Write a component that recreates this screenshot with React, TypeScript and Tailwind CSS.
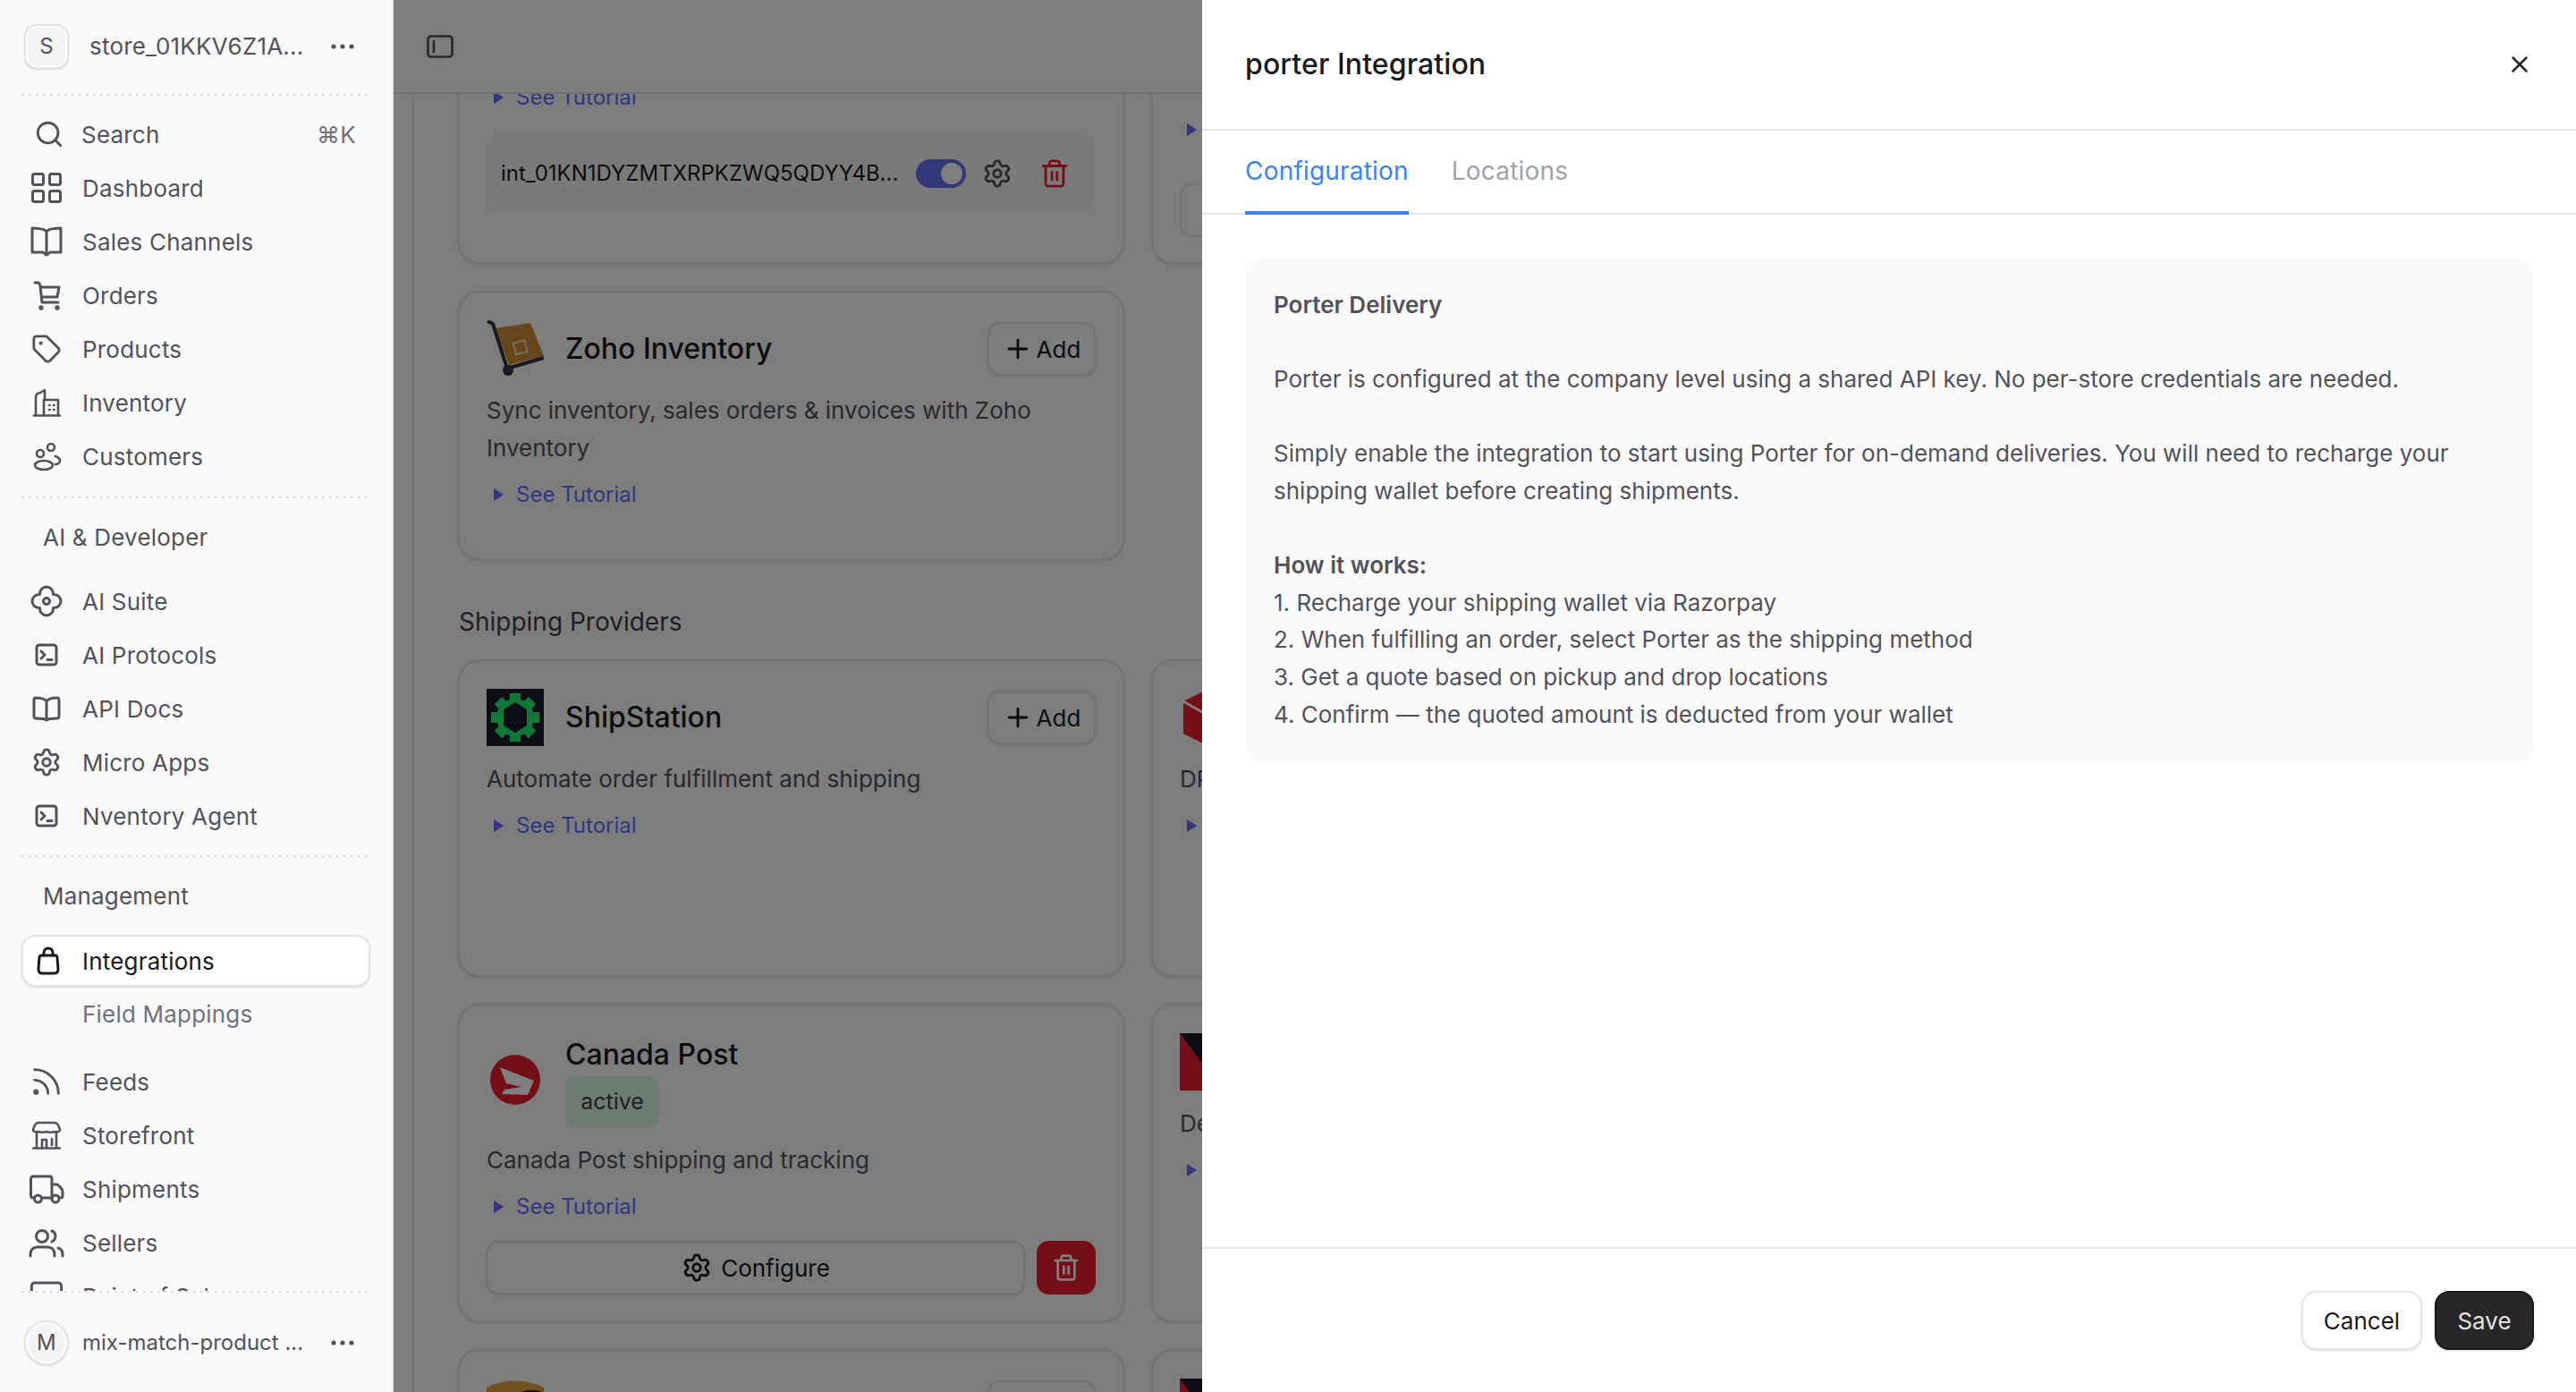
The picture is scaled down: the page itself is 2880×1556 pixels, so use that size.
import { ReactNode } from "react";
import { Plus, Search, Settings, Rss, Tag, Trash2, X, Monitor } from "lucide-react";

const inter = "font-['Inter',sans-serif]";

function Svg({ size = 36, children, w }: { size?: number; w?: number; children: ReactNode }) {
  return (
    <svg
      width={w ?? size}
      height={size}
      viewBox={`0 0 ${w ?? size} ${size}`}
      fill="none"
      stroke="currentColor"
      strokeWidth="3"
      strokeLinecap="round"
      strokeLinejoin="round"
      className="shrink-0"
    >
      {children}
    </svg>
  );
}

const DashboardIcon = () => (
  <Svg>
    <rect x="2.5" y="2.5" width="12" height="12" rx="2" />
    <rect x="21.5" y="2.5" width="12" height="12" rx="2" />
    <rect x="2.5" y="21.5" width="12" height="12" rx="2" />
    <rect x="21.5" y="21.5" width="12" height="12" rx="2" />
  </Svg>
);
const BookSquareIcon = () => (
  <Svg w={38}>
    <path d="M19 7C17 4 13 3 3 3V30H15L19 33L23 30H35V3C25 3 21 4 19 7ZM19 7V31" />
  </Svg>
);
const CartIcon = () => (
  <Svg>
    <path d="M5 4H8C10 4 10.5 5 11 8L13 26H31" />
    <path d="M11.5 9H32L30 20H13" />
    <circle cx="12" cy="32" r="1.2" />
    <circle cx="30" cy="32" r="1.2" />
  </Svg>
);
const BuildingIcon = () => (
  <Svg>
    <path d="M4 32.5H33" strokeWidth="2.6" />
    <path d="M6 32V13C6 9 8 7 11 7L16 4V15" strokeWidth="2.6" />
    <path d="M15 32V15H31V32" strokeWidth="2.6" />
    <path d="M21 21h.6M26 21h.6M21 26h.6M26 26h.6" strokeWidth="2.6" />
  </Svg>
);
const CustomersIcon = () => (
  <Svg>
    <circle cx="23" cy="8" r="4" strokeWidth="2.6" />
    <circle cx="11" cy="15" r="4" strokeWidth="2.6" />
    <ellipse cx="15" cy="28" rx="10" ry="5" strokeWidth="2.6" />
    <path d="M28 18C31 19 33 21 33 23C33 25 31 27 28 27" strokeWidth="2.6" />
  </Svg>
);
const CloverIcon = () => (
  <Svg>
    <path d="M18 2a7.5 7.5 0 0 1 7.5 7.5v1h1a7.5 7.5 0 0 1 0 15h-1v1a7.5 7.5 0 0 1-15 0v-1h-1a7.5 7.5 0 0 1 0-15h1v-1A7.5 7.5 0 0 1 18 2Z" />
    <circle cx="18" cy="18" r="3.5" />
  </Svg>
);
const TerminalIcon = () => (
  <Svg>
    <rect x="7" y="7" width="22" height="22" rx="3" />
    <path d="M12 14l4 4-4 4M19 23.5h5" />
  </Svg>
);
const BookIcon = () => (
  <Svg>
    <path d="M18 10C16 7 11 6 5 6H6C5 6 4 7 4 8V27C4 28 5 29 6 29C11 29 16 29 18 31C20 29 25 29 30 29C31 29 32 28 32 27V8C32 7 31 6 30 6C25 6 20 7 18 10ZM18 10V30" />
  </Svg>
);
const StoreIcon = () => (
  <Svg>
    <path
      d="M9 4H27C30 4 32 8 33 12C33 14 30 15 27 14C24 15 21 15 18 14C15 15 12 15 9 14C6 15 3 14 3 12C4 8 6 4 9 4Z"
      strokeWidth="2.6"
    />
    <path d="M7 15V32M29 15V32M3 32.5H33M13 32V23H18V32M24 22V29" strokeWidth="2.6" />
  </Svg>
);
const TruckIcon = () => (
  <Svg w={40}>
    <path d="M6 28H5C3.5 28 2.5 27 2.5 25V7C2.5 5 3.5 4 5 4H24C25 4 26 5 26 7V28H15" />
    <path d="M26 13H31C33 13 38 18 38 21V26C38 27 37 28 35 28" />
    <circle cx="10.5" cy="29" r="4" />
    <circle cx="30" cy="29" r="4" />
  </Svg>
);
const UsersIcon = () => (
  <Svg w={40}>
    <circle cx="15" cy="11" r="6.5" />
    <path d="M2 33V31C2 26 5 23 10 23H21C26 23 29 26 29 31V33" />
    <path d="M26 5C29 6 30 8 30 11C30 14 28 16 26 17" />
    <path d="M33 24C36 25 38 28 38 31V33" />
  </Svg>
);
const BagIcon = () => (
  <Svg>
    <path d="M10.5 12H25.5C27 12 28 13 28 14.5L29 27C29 30 27.5 32 25 32H11C8.5 32 7 30 7 27L8 14.5C8 13 9 12 10.5 12Z" />
    <path d="M13 12V9C13 6 15 4 18 4C21 4 23 6 23 9V12" />
  </Svg>
);
const DotsIcon = () => (
  <svg width="26" height="6" viewBox="0 0 26 6" fill="#52525b" className="shrink-0">
    <circle cx="3" cy="3" r="2.6" />
    <circle cx="13" cy="3" r="2.6" />
    <circle cx="23" cy="3" r="2.6" />
  </svg>
);

function Separator() {
  return (
    <div className="ml-6 mr-[28px] h-[2px] shrink-0 bg-[linear-gradient(to_right,#d4d4d8_2px,transparent_2px)] bg-[length:8px_2px]" />
  );
}

function NavRow({ icon, label }: { icon: ReactNode; label: string }) {
  return (
    <div className="flex h-[60px] items-center text-[#52525b]">
      <div className="flex w-[92px] shrink-0 justify-center pl-[12px]">{icon}</div>
      <span>{label}</span>
    </div>
  );
}

function SectionLabel({ children }: { children: ReactNode }) {
  return <div className="flex h-[60px] items-center pl-[48px] text-[#52525b]">{children}</div>;
}

function Sidebar() {
  return (
    <aside className="z-10 flex h-full w-[440px] shrink-0 flex-col border-r-2 border-[#e4e4e7] bg-[#fafafa] text-[26px] tracking-[0.2px]">
      <div className="flex h-[105px] shrink-0 items-center pl-[27px] pr-[42px] pb-[2px]">
        <div className="flex h-[50px] w-[50px] items-center justify-center rounded-[14px] border-2 border-[#e4e4e7] bg-white shadow-sm">
          <div className="flex h-[42px] w-[42px] items-center justify-center rounded-[8px] bg-[#f4f4f5] text-[24px] text-[#52525b]">
            S
          </div>
        </div>
        <span className="ml-[23px] flex-1 text-[#52525b]">store_01KKV6Z1A...</span>
        <DotsIcon />
      </div>
      <Separator />
      <nav className="min-h-0 flex-1 overflow-hidden">
        <div className="mt-[13px] flex h-[60px] items-center pr-[40px] text-[#52525b]">
          <div className="flex w-[91px] shrink-0 justify-center pl-[18px]">
            <Search size={34} strokeWidth={2} />
          </div>
          <span className="flex-1">Search</span>
          <span className="text-[#71717a]">⌘K</span>
        </div>
        <NavRow icon={<DashboardIcon />} label="Dashboard" />
        <NavRow icon={<BookSquareIcon />} label="Sales Channels" />
        <NavRow icon={<CartIcon />} label="Orders" />
        <NavRow icon={<Tag size={34} strokeWidth={2} />} label="Products" />
        <NavRow icon={<BuildingIcon />} label="Inventory" />
        <NavRow icon={<CustomersIcon />} label="Customers" />
        <div className="mt-[15px]">
          <Separator />
        </div>
        <div className="mt-[13px]">
          <SectionLabel>AI &amp; Developer</SectionLabel>
        </div>
        <div className="mt-[12px]">
          <NavRow icon={<CloverIcon />} label="AI Suite" />
          <NavRow icon={<TerminalIcon />} label="AI Protocols" />
          <NavRow icon={<BookIcon />} label="API Docs" />
          <NavRow icon={<Settings size={34} strokeWidth={2} />} label="Micro Apps" />
          <NavRow icon={<TerminalIcon />} label="Nventory Agent" />
        </div>
        <div className="mt-[14px]">
          <Separator />
        </div>
        <div className="mt-[13px]">
          <SectionLabel>Management</SectionLabel>
        </div>
        <div className="mx-[24px] mt-[14px] flex h-[58px] w-[390px] items-center rounded-[16px] border-2 border-[#e4e4e7] bg-white text-[#18181b] shadow-sm">
          <div className="flex w-[55px] shrink-0 justify-center">
            <BagIcon />
          </div>
          <span className="ml-[11px]">Integrations</span>
        </div>
        <div className="flex h-[60px] items-center pl-[92px] text-[#71717a]">Field Mappings</div>
        <div className="mt-[16px]">
          <NavRow icon={<Rss size={40} strokeWidth={1.7} />} label="Feeds" />
          <NavRow icon={<StoreIcon />} label="Storefront" />
          <NavRow icon={<TruckIcon />} label="Shipments" />
          <NavRow icon={<UsersIcon />} label="Sellers" />
          <NavRow icon={<Monitor size={40} strokeWidth={1.8} />} label="Point of Sale" />
        </div>
      </nav>
      <Separator />
      <div className="flex h-[111px] shrink-0 items-center pl-[27px] pr-[42px]">
        <div className="flex h-[50px] w-[50px] items-center justify-center rounded-full border-2 border-[#e4e4e7] bg-white shadow-sm">
          <div className="flex h-[42px] w-[42px] items-center justify-center rounded-full bg-[#f4f4f5] text-[24px] text-[#52525b]">
            M
          </div>
        </div>
        <span className="ml-[15px] flex-1 text-[24px] tracking-normal text-[#52525b]">mix-match-product ...</span>
        <DotsIcon />
      </div>
    </aside>
  );
}

const ZohoLogo = () => (
  <svg width="64" height="64" viewBox="0 0 64 64" className="shrink-0">
    <polygon points="10,9 49,3 64,40 25,50" fill="#cf8d36" />
    <rect x="31" y="24" width="13" height="13" fill="none" stroke="#f4dcb0" strokeWidth="2" transform="rotate(-15 37 30)" />
    <path d="M1 1L7 4L23 54L64 42" fill="none" stroke="#33333d" strokeWidth="4" />
    <circle cx="24" cy="56" r="6" fill="#33333d" />
  </svg>
);

const ShipStationLogo = () => (
  <svg width="64" height="64" viewBox="0 0 64 64" className="shrink-0">
    <rect width="64" height="64" fill="#1b1a2c" />
    <g fill="#24f06f">
      <circle cx="32" cy="32" r="21" />
      {[0, 45, 90, 135].map((a) => (
        <rect key={a} x="26" y="5" width="12" height="54" transform={`rotate(${a} 32 32)`} />
      ))}
    </g>
    <polygon points="32,15 45,23 45,41 32,49 19,41 19,23" fill="#1b1a2c" />
  </svg>
);

const CanadaPostLogo = () => (
  <svg width="64" height="64" viewBox="0 0 64 64" className="shrink-0">
    <circle cx="32" cy="32" r="28" fill="#e81f2e" />
    <polygon points="15,18 53,33 46,49 17,48 20,43 39,40 22,36" fill="#ffffff" />
  </svg>
);

const DpdLogo = () => (
  <svg width="64" height="64" viewBox="0 0 64 64" className="shrink-0">
    <polygon points="32,0 60,14 60,50 32,64 4,50 4,14" fill="#e81f2e" />
    <path d="M4 14L32 30" stroke="#ffffff" strokeWidth="3" />
  </svg>
);

const FlagLogo = () => (
  <svg width="64" height="64" viewBox="0 0 64 64" className="shrink-0">
    <rect width="64" height="64" fill="#e81f2e" />
    <polygon points="0,0 64,0 64,60 24,32" fill="#1b1a2c" />
  </svg>
);

const UpsLogo = () => (
  <svg width="64" height="64" viewBox="0 0 64 64" className="shrink-0">
    <path d="M0 10C20 0 44 0 64 10V40C64 52 44 60 32 64C20 60 0 52 0 40Z" fill="#e3a23a" />
    <path d="M26 26C36 12 48 12 60 14V40H26Z" fill="#1b1a2c" />
  </svg>
);

function SeeTutorial() {
  return (
    <div className="mt-[14px] flex h-[34px] items-center gap-[14px] pl-[8px] text-[24px] text-[#5f70ff]">
      <svg width="11" height="14" viewBox="0 0 11 14" className="shrink-0">
        <polygon points="0,0 11,7 0,14" fill="#5f70ff" />
      </svg>
      See Tutorial
    </div>
  );
}

function AddButton() {
  return (
    <button className="ml-auto flex h-[60px] w-[121px] shrink-0 items-center justify-center gap-[4px] rounded-[14px] border-2 border-[#e4e4e7] bg-[#fafafa] text-[26px] text-[#18181b] shadow-sm">
      <Plus size={34} strokeWidth={2} />
      Add
    </button>
  );
}

function Card({ height, children }: { height: string; children: ReactNode }) {
  return (
    <div className={`${height} overflow-hidden rounded-[24px] border-2 border-[#e4e4e7] bg-[#fafafa] px-[30px] pt-[31px] shadow-sm`}>
      {children}
    </div>
  );
}

function Provider({ logo, name, desc }: { logo: ReactNode; name: string; desc: string }) {
  return (
    <>
      <div className="flex h-[64px] items-center">
        {logo}
        <span className="ml-[24px] text-[32px] font-medium text-[#18181b]">{name}</span>
        <AddButton />
      </div>
      <p className="mt-[16px] text-[26px] leading-[42px] text-[#52525b]">{desc}</p>
      <SeeTutorial />
    </>
  );
}

function Main() {
  return (
    <main className="relative flex h-full min-w-0 flex-1 flex-col bg-[#fafafa]">
      <header className="flex h-[105px] shrink-0 items-center border-b-2 border-[#e4e4e7] pl-[37px] text-[#52525b]">
        <svg width="30" height="26" viewBox="0 0 30 26" fill="none" stroke="currentColor" strokeWidth="2.6" strokeLinecap="round">
          <rect x="1.5" y="1.5" width="27" height="23" rx="3.5" />
          <path d="M8 7V19" />
        </svg>
      </header>
      <div className="ml-[21px] min-h-0 flex-1 overflow-hidden border-l-2 border-[#e4e4e7] pl-[49px]">
        <div className="-mt-[45px] grid w-[1520px] grid-cols-[745px_745px] gap-x-[30px]">
          <div className="h-[235px] overflow-hidden rounded-[24px] border-2 border-[#e4e4e7] bg-[#fafafa] px-[30px] pt-[30px] shadow-sm">
            <div className="-mt-[14px]">
              <SeeTutorial />
            </div>
            <div className="mt-[24px] flex h-[88px] items-center rounded-[14px] bg-[#f4f4f5] pl-[16px] pr-[29px] text-[24px] text-[#18181b]">
              <span className="flex-1">int_01KN1DYZMTXRPKZWQ5QDYY4B...</span>
              <div className="flex h-[32px] w-[56px] items-center justify-end rounded-full bg-[#6472f0] pr-[4px]">
                <div className="h-[24px] w-[24px] rounded-full bg-white" />
              </div>
              <Settings size={34} strokeWidth={2} className="ml-[18px] text-[#52525b]" />
              <Trash2 size={34} strokeWidth={2} className="ml-[30px] text-[#e81f2e]" />
            </div>
          </div>
          <div className="h-[235px] overflow-hidden rounded-[24px] border-2 border-[#e4e4e7] bg-[#fafafa] px-[30px] pt-[66px] shadow-sm">
            <div className="-mt-[14px]">
              <SeeTutorial />
            </div>
            <div className="mt-[43px] h-[60px] rounded-[14px] border-2 border-[#e4e4e7]" />
          </div>

          <div className="col-span-2 mt-[30px] grid grid-cols-[745px_745px] gap-x-[30px]">
            <Card height="h-[301px]">
              <Provider
                logo={<ZohoLogo />}
                name="Zoho Inventory"
                desc="Sync inventory, sales orders & invoices with Zoho Inventory"
              />
            </Card>
            <div />
          </div>

          <div className="col-span-2 mt-[52px] flex h-[34px] items-center pl-[1px] text-[28px] text-[#3f3f46]">
            Shipping Providers
          </div>

          <div className="col-span-2 mt-[25px] grid grid-cols-[745px_745px] gap-x-[30px] gap-y-[30px]">
            <Card height="h-[355px]">
              <Provider logo={<ShipStationLogo />} name="ShipStation" desc="Automate order fulfillment and shipping" />
            </Card>
            <Card height="h-[355px]">
              <Provider logo={<DpdLogo />} name="DPD" desc="DPD shipping and tracking" />
            </Card>
            <Card height="h-[356px]">
              <div className="flex h-[105px] items-start">
                <div className="mt-[20px]">
                  <CanadaPostLogo />
                </div>
                <div className="ml-[24px]">
                  <div className="h-[48px] text-[32px] leading-[48px] font-medium text-[#18181b]">Canada Post</div>
                  <div className="flex h-[57px] w-[105px] items-center justify-center rounded-[12px] bg-[#d8f8e6] text-[25px] text-[#3f3f46]">
                    active
                  </div>
                </div>
              </div>
              <p className="mt-[16px] text-[26px] leading-[42px] text-[#52525b]">Canada Post shipping and tracking</p>
              <SeeTutorial />
              <div className="mt-[21px] flex h-[60px] gap-[13px]">
                <button className="flex flex-1 items-center justify-center gap-[10px] rounded-[14px] border-2 border-[#e4e4e7] text-[26px] text-[#18181b] shadow-sm">
                  <Settings size={34} strokeWidth={2} />
                  Configure
                </button>
                <button className="flex w-[66px] items-center justify-center rounded-[14px] bg-[#e81f2e] text-white">
                  <Trash2 size={32} strokeWidth={2} />
                </button>
              </div>
            </Card>
            <Card height="h-[356px]">
              <Provider logo={<FlagLogo />} name="DHL" desc="Deutsche Post shipping" />
            </Card>
            <Card height="h-[340px]">
              <Provider logo={<UpsLogo />} name="UPS" desc="UPS shipping and tracking" />
            </Card>
            <Card height="h-[340px]">
              <Provider logo={<FlagLogo />} name="Aramex" desc="Aramex shipping" />
            </Card>
          </div>
        </div>
      </div>
      {/* modal backdrop */}
      <div className="absolute inset-0 bg-black/50" />
    </main>
  );
}

function Drawer() {
  return (
    <div className="absolute inset-y-0 right-0 z-20 flex w-[1536px] flex-col bg-white">
      <div className="flex h-[146px] shrink-0 items-center justify-between border-b-2 border-[#e4e4e7] pl-[48px] pr-[48px]">
        <h2 className="text-[32px] font-medium tracking-[0.1px] text-[#18181b]">porter Integration</h2>
        <X size={30} strokeWidth={2} className="text-[#27272a]" />
      </div>
      <div className="flex h-[94px] shrink-0 gap-[48px] border-b-2 border-[#e4e4e7] px-[48px] text-[28px] tracking-[0.2px]">
        <div className="relative flex items-center pb-[2px] text-[#3b82f6]">
          Configuration
          <div className="absolute inset-x-0 -bottom-[2px] h-[4px] bg-[#3b82f6]" />
        </div>
        <div className="flex items-center pb-[2px] text-[#a1a1aa]">Locations</div>
      </div>
      <div className="min-h-0 flex-1 px-[48px] pt-[48px]">
        <div className="rounded-[14px] bg-[#fafafa] p-[32px] text-[26px] leading-[41.6px] whitespace-pre-wrap text-[#52525b]">
          <strong className="font-semibold">Porter Delivery</strong>
          {"\n\nPorter is configured at the company level using a shared API key. No per-store credentials are needed.\n\nSimply enable the integration to start using Porter for on-demand deliveries. You will need to recharge your shipping wallet before creating shipments.\n\n"}
          <strong className="font-semibold">How it works:</strong>
          {"\n1. Recharge your shipping wallet via Razorpay\n2. When fulfilling an order, select Porter as the shipping method\n3. Get a quote based on pickup and drop locations\n4. Confirm — the quoted amount is deducted from your wallet"}
        </div>
      </div>
      <div className="flex h-[162px] shrink-0 items-start justify-end gap-[14px] border-t-2 border-[#e4e4e7] pr-[47px] pt-[47px] text-[26px]">
        <button className="h-[66px] w-[135px] rounded-[16px] border-2 border-[#e4e4e7] bg-white text-[#18181b] shadow-sm">Cancel</button>
        <button className="h-[66px] w-[111px] rounded-[16px] border-2 border-[#18181b] bg-[#27272a] text-[#e4e4e7] shadow-sm">Save</button>
      </div>
    </div>
  );
}

export default function App() {
  return (
    <div className={`${inter} relative flex h-[1556px] w-[2880px] overflow-hidden bg-[#fafafa]`}>
      <Sidebar />
      <Main />
      <Drawer />
    </div>
  );
}
